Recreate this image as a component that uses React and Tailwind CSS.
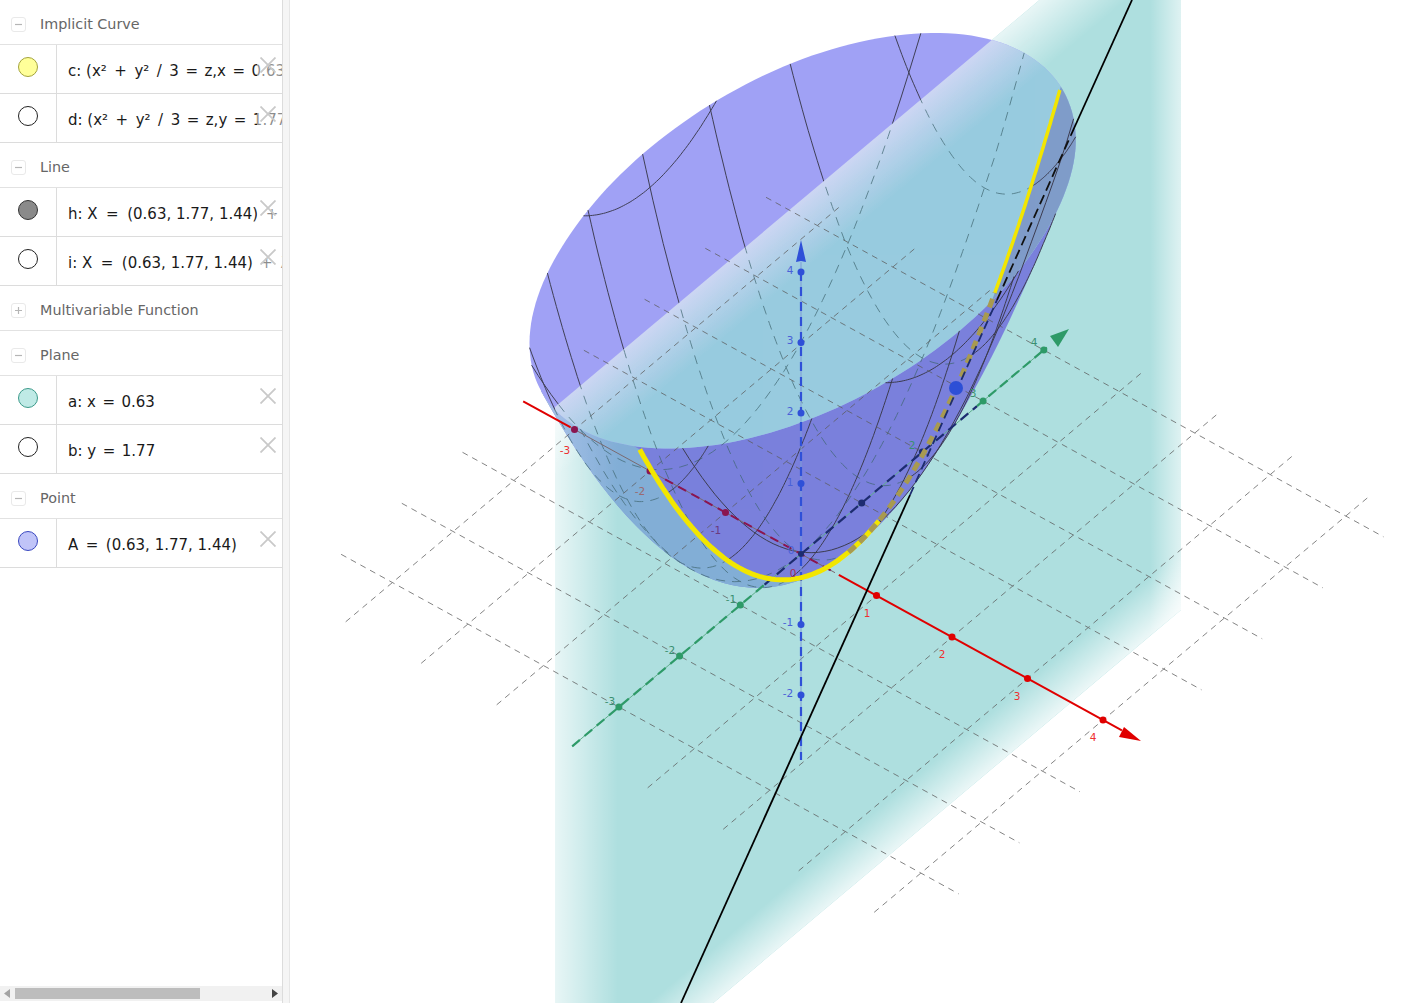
import React from 'react';

const sansFont = { fontFamily: '"DejaVu Sans", sans-serif' };

// view projection of the 3D scene onto screen pixels
const project = (x, y, z) => [801 + 75.5 * x + 60.7 * y, 554 + 41.5 * x - 51 * y - 70.5 * z];
const surfZ = (x, y) => x * x + (y * y) / 3;
const RIM = 4.4;

// the far side of the bowl sits a little further out in the reference (perspective)
const warp = ([px, py]) => {
  const far = Math.max(0, Math.min(1, (244 - py) / 90));
  return [
    px > 801 ? 801 + (px - 801) * (1 + 0.012 * far) : px,
    py < 244 ? py - (244 - py) * 0.03 : py,
  ];
};
const surfPoint = (x, y) => warp(project(x, y, surfZ(x, y)));

const toPath = (pts) => 'M' + pts.map((p) => p[0].toFixed(1) + ' ' + p[1].toFixed(1)).join('L');
const range = (a, b, n = 60) => Array.from({ length: n + 1 }, (_, i) => a + ((b - a) * i) / n);

const rimPts = range(0, Math.PI * 2, 180).map((t) => {
  const x = Math.sqrt(RIM) * Math.cos(t);
  const y = Math.sqrt(3 * RIM) * Math.sin(t);
  return warp(project(x, y, RIM));
});
const rimPath = toPath(rimPts) + 'Z';

// fold of the paraboloid as seen from the camera
const silX = (y) => 0.744 + 0.4147 * y;
const silPts = (a, b) => range(a, b).map((y) => project(silX(y), y, surfZ(silX(y), y)));
const yellowPts = (a, b) => range(a, b).map((y) => project(0.63, y, surfZ(0.63, y)));

const bodyPath = toPath(silPts(-3.437, 2.216)) + 'Z';
const frontPath = toPath([...silPts(-3.437, -0.275), ...yellowPts(-0.275, -3.44)]) + 'Z';
const rightPath = toPath([...yellowPts(0.5, 3.8), [1110, 40], [1110, 420]]) + 'Z';

const planePoly = '555,407 1181,-119 1181,610 555,1136';
const outsidePlane = 'M290 -10H1414V1010H290Z M555 407L1181 -119L1181 610L555 1136Z';

const behind = [];
const front = [];
[-3, -2, -1, 0, 1, 2, 3].forEach((y) => {
  const m = Math.sqrt(RIM - (y * y) / 3);
  behind.push(toPath(range(-m, Math.min(m, 0.63)).map((x) => surfPoint(x, y))));
  front.push(toPath(range(0.63, m).map((x) => surfPoint(x, y))));
});
[-2, -1, 0, 1, 2].forEach((x) => {
  const m = Math.sqrt(3 * (RIM - x * x));
  const d = toPath(range(-m, m).map((y) => surfPoint(x, y)));
  if (x < 0.63) behind.push(d);
  else front.push(d);
});

const grid = [];
[-3, -2, -1, 1, 2, 3, 4].forEach((k) => {
  grid.push(toPath([project(-3.68, k, 0), project(4.5, k, 0)]));
  grid.push(toPath([project(k, -3.77, 0), project(k, 4.4, 0)]));
});

const xLabels = [['-3', 565, 454, '#ee3030'], ['-2', 640, 495, '#9a6a70'], ['-1', 716, 534, '#6a3a80'], ['1', 867, 617, '#ee3030'], ['2', 942, 658, '#ee3030'], ['3', 1017, 700, '#ee3030'], ['4', 1093, 741, '#ee3030']];
const yLabels = [['-3', 610, 705], ['-2', 670, 654], ['-1', 731, 603], ['2', 912, 449], ['3', 973, 397], ['4', 1034, 346]];
const zLabels = [['4', 790, 274], ['3', 790, 344], ['2', 790, 415], ['1', 790, 486], ['-1', 788, 626], ['-2', 788, 697]];

const Scene = () => (
  <svg className="absolute inset-0 w-full h-full" viewBox="290 0 1124 1003">
    <defs>
      <linearGradient id="fadeL" gradientUnits="userSpaceOnUse" x1="555" y1="0" x2="618" y2="0">
        <stop offset="0" stopColor="#fff" stopOpacity="0.72" />
        <stop offset="1" stopColor="#fff" stopOpacity="0" />
      </linearGradient>
      <linearGradient id="fadeR" gradientUnits="userSpaceOnUse" x1="1181" y1="0" x2="1150" y2="0">
        <stop offset="0" stopColor="#fff" stopOpacity="0.6" />
        <stop offset="1" stopColor="#fff" stopOpacity="0" />
      </linearGradient>
      <linearGradient id="fadeT" gradientUnits="userSpaceOnUse" x1="988" y1="43" x2="1024" y2="86">
        <stop offset="0" stopColor="#fff" stopOpacity="0.72" />
        <stop offset="1" stopColor="#fff" stopOpacity="0" />
      </linearGradient>
      <linearGradient id="fadeB" gradientUnits="userSpaceOnUse" x1="950" y1="804" x2="922" y2="771">
        <stop offset="0" stopColor="#fff" stopOpacity="0.75" />
        <stop offset="1" stopColor="#fff" stopOpacity="0" />
      </linearGradient>
      <linearGradient id="innerFade" gradientUnits="userSpaceOnUse" x1="988" y1="43" x2="1024" y2="86">
        <stop offset="0" stopColor="#cdd6f3" />
        <stop offset="1" stopColor="#98cbdf" />
      </linearGradient>
      <linearGradient id="frontFade" gradientUnits="userSpaceOnUse" x1="555" y1="0" x2="618" y2="0">
        <stop offset="0" stopColor="#a4bfe6" />
        <stop offset="1" stopColor="#82aed6" />
      </linearGradient>
      <clipPath id="rimClip"><path d={rimPath} /></clipPath>
      <clipPath id="planeClip"><polygon points={planePoly} /></clipPath>
      <clipPath id="outsideClip"><path d={outsidePlane} clipRule="evenodd" /></clipPath>
    </defs>

    {/* plane a */}
    <polygon points={planePoly} fill="#aedfdf" />
    <g clipPath="url(#planeClip)">
      <rect x="555" y="-120" width="63" height="1260" fill="url(#fadeL)" />
      <rect x="1150" y="-120" width="31" height="1260" fill="url(#fadeR)" />
      <polygon points={planePoly} fill="url(#fadeT)" />
      <polygon points={planePoly} fill="url(#fadeB)" />
    </g>

    {/* paraboloid */}
    <path d={bodyPath} fill="#7a80dc" />
    <path d={frontPath} fill="url(#frontFade)" />
    <path d={rimPath} fill="#a0a1f5" />
    <g clipPath="url(#rimClip)">
      <polygon points={planePoly} fill="url(#innerFade)" />
      <path d={rightPath} fill="#7f9cc9" />
    </g>

    {/* mesh */}
    <g fill="none" strokeWidth="1">
      <g clipPath="url(#outsideClip)" stroke="#3f3f55">
        {behind.map((d, i) => <path key={i} d={d} />)}
      </g>
      <g clipPath="url(#planeClip)" stroke="#3f6670" strokeDasharray="9 7" opacity="0.7">
        {behind.map((d, i) => <path key={i} d={d} />)}
      </g>
      <g stroke="#3c3c50">
        {front.map((d, i) => <path key={i} d={d} />)}
      </g>
    </g>

    {/* grid */}
    <g fill="none" stroke="#5c5c5c" strokeWidth="1" strokeDasharray="6 5" opacity="0.75">
      {grid.map((d, i) => <path key={i} d={d} />)}
    </g>

    {/* x axis */}
    <path d={toPath([project(-3.68, 0, 0), project(-3.05, 0, 0)])} stroke="#e00000" strokeWidth="2" fill="none" />
    <path d={toPath([project(-3.05, 0, 0), project(0.45, 0, 0)])} stroke="#7a6a70" strokeWidth="1" fill="none" />
    <path d={toPath([project(-1.8, 0, 0), project(0.45, 0, 0)])} stroke="#8a1550" strokeWidth="2" strokeDasharray="9 6" fill="none" />
    <path d={toPath([project(0.5, 0, 0), project(4.25, 0, 0)])} stroke="#e00000" strokeWidth="2" fill="none" />
    <polygon points="1141,741 1124,727 1119,737" fill="#e00000" />
    {[-3, -2, -1].map((a) => {
      const [cx, cy] = project(a, 0, 0);
      return <circle key={a} cx={cx} cy={cy} r="3.5" fill="#8a1550" />;
    })}
    {[1, 2, 3, 4].map((a) => {
      const [cx, cy] = project(a, 0, 0);
      return <circle key={a} cx={cx} cy={cy} r="3.5" fill="#e00000" />;
    })}

    {/* y axis */}
    <path d={toPath([project(0, -3.77, 0), project(0, 4.05, 0)])} stroke="#5fae8c" strokeWidth="1" fill="none" />
    <path d={toPath([project(0, -3.77, 0), project(0, -0.6, 0)])} stroke="#2e9a68" strokeWidth="2.2" strokeDasharray="10 6" fill="none" />
    <path d={toPath([project(0, -0.6, 0), project(0, 2.9, 0)])} stroke="#1d2c70" strokeWidth="2.2" strokeDasharray="10 6" fill="none" />
    <path d={toPath([project(0, 2.9, 0), project(0, 4.05, 0)])} stroke="#2e9a68" strokeWidth="2.2" strokeDasharray="10 5" fill="none" />
    <polygon points="1069,329 1050,336 1058,347" fill="#2e9a68" />
    {[-3, -2, -1, 3, 4].map((b) => {
      const [cx, cy] = project(0, b, 0);
      return <circle key={b} cx={cx} cy={cy} r="3.5" fill="#2e9a68" />;
    })}
    {[1, 2].map((b) => {
      const [cx, cy] = project(0, b, 0);
      return <circle key={b} cx={cx} cy={cy} r="3.5" fill="#1d2c70" />;
    })}

    {/* z axis */}
    <path d="M801 262V760" stroke="#7d9cd8" strokeWidth="1" fill="none" />
    <path d="M801 272V760" stroke="#2f50d8" strokeWidth="2.2" strokeDasharray="9 6" fill="none" />
    <polygon points="801,240 796,262 801,261 806,262" fill="#2f50d8" />
    {[4, 3, 2, 1, -1, -2].map((c) => <circle key={c} cx="801" cy={554 - 70.5 * c} r="3.5" fill="#2f50d8" />)}
    <circle cx="801" cy="554" r="3" fill="#1d2c70" />

    {/* curve c */}
    <path d={toPath(yellowPts(-3.44, 0.5))} fill="none" stroke="#f2e600" strokeWidth="5" strokeLinejoin="round" />
    <path d={toPath(yellowPts(0, 2.41))} fill="none" stroke="#a89a50" strokeWidth="5" strokeDasharray="9 6" />
    <path d={toPath(yellowPts(2.41, 3.48))} fill="none" stroke="#f2e600" strokeWidth="3.5" />

    {/* line h */}
    <path d="M681 1003L910 495" stroke="#000" strokeWidth="1.8" fill="none" />
    <path d="M910 495L997 300" stroke="#1d2c70" strokeWidth="1.8" strokeDasharray="9 5" fill="none" />
    <path d="M997 300L1071 135" stroke="#111" strokeWidth="1.8" strokeDasharray="10 5" fill="none" />
    <path d="M1071 135L1132 0" stroke="#000" strokeWidth="1.8" fill="none" />

    {/* point A */}
    <circle cx="956" cy="388" r="7" fill="#2d4fd6" />

    {/* axis labels */}
    <g fontSize="10.5" style={sansFont}>
      {xLabels.map(([t, x, y, c]) => <text key={t} x={x} y={y} textAnchor="middle" fill={c}>{t}</text>)}
      {yLabels.map(([t, x, y]) => <text key={t} x={x} y={y} textAnchor="middle" fill="#3a8f70">{t}</text>)}
      {zLabels.map(([t, x, y]) => <text key={t} x={x} y={y} textAnchor="middle" fill="#4a60d8">{t}</text>)}
      <text x="793" y="577" textAnchor="middle" fill="#a03060">0</text>
      <text x="791" y="554" textAnchor="middle" fill="#4a60d8">0</text>
    </g>
  </svg>
);

// operators in the formulas have uneven spacing, as the editor typesets them
const Op = ({ children, m = 'mx-[6.5px]' }) => <span className={m}>{children}</span>;
const Plus = () => <Op m="mx-[7.5px]">+</Op>;
const Slash = () => <Op m="mx-[7.5px]">/</Op>;
const WideEq = () => <Op m="mx-[8.5px]">=</Op>;

const Toggle = ({ open }) => (
  <span className="w-[15px] h-[15px] border border-[#e9e9e9] rounded-[3px] flex items-center justify-center text-[#b5b5b5]">
    <svg width="9" height="9" viewBox="0 0 9 9">
      <path d={open ? 'M1 4.5H8' : 'M1 4.5H8M4.5 1V8'} stroke="currentColor" strokeWidth="1.2" />
    </svg>
  </span>
);

const Group = ({ title, open = true }) => (
  <div className="h-[45px] pt-[4px] border-b border-[#e2e2e2] flex items-center pl-[11px] gap-[14px]">
    <Toggle open={open} />
    <span className="mt-[2px] text-[14.35px] text-[#666]">{title}</span>
  </div>
);

const Row = ({ marble, children }) => (
  <div className="relative h-[49px] border-b border-[#dcdcdc] flex overflow-hidden">
    <div className="w-[57px] shrink-0 border-r border-[#dcdcdc] flex justify-center pt-[12px]">
      <span className={`w-[20px] h-[20px] rounded-full border ${marble}`} />
    </div>
    <div className="pl-[11px] pt-[15px] text-[15px] leading-[22px] text-[#1a1a1a] whitespace-nowrap">{children}</div>
    <div className="absolute right-0 top-0 w-[25px] h-full bg-white/50">
      <svg className="absolute left-[3px] top-[12px]" width="16" height="16" viewBox="0 0 16 16">
        <path d="M0.5 0.5L15.5 15.5M15.5 0.5L0.5 15.5" stroke="#c9c9c9" strokeWidth="1.8" fill="none" />
      </svg>
    </div>
  </div>
);

const Scrollbar = () => (
  <div className="h-[15px] mb-[2px] bg-[#f1f1f1] flex items-center relative shrink-0">
    <svg className="absolute left-[4px] top-[3px]" width="6" height="9" viewBox="0 0 6 9">
      <path d="M6 0V9L0 4.5Z" fill="#a3a3a3" />
    </svg>
    <div className="ml-[15px] w-[185px] h-[11px] bg-[#bdbdbd]" />
    <svg className="absolute right-[4px] top-[3px]" width="6" height="9" viewBox="0 0 6 9">
      <path d="M0 0V9L6 4.5Z" fill="#444" />
    </svg>
  </div>
);

export default function App() {
  return (
    <div className="flex w-[1414px] h-[1003px] bg-white overflow-hidden" style={sansFont}>
      <div className="w-[283px] shrink-0 flex flex-col border-r border-[#dcdcdc]">
        <div className="flex-1 overflow-hidden">
          <Group title="Implicit Curve" />
          <Row marble="bg-[#ffff99] border-[#a3a33c]">c: (x²<Plus />y²<Slash />3<Op>=</Op>z,x<Op>=</Op>0.63</Row>
          <Row marble="bg-white border-[#222]">d: (x²<Plus />y²<Slash />3<Op>=</Op>z,y<Op>=</Op>1.77</Row>
          <Group title="Line" />
          <Row marble="bg-[#8a8a8a] border-[#333]">h: X<WideEq />(0.63, 1.77, 1.44)<Plus />λ</Row>
          <Row marble="bg-white border-[#222]">i: X<WideEq />(0.63, 1.77, 1.44)<Plus />λ</Row>
          <Group title="Multivariable Function" open={false} />
          <Group title="Plane" />
          <Row marble="bg-[#bfeae6] border-[#3c9a8a]">a: x<Op>=</Op>0.63</Row>
          <Row marble="bg-white border-[#222]">b: y<Op>=</Op>1.77</Row>
          <Group title="Point" />
          <Row marble="bg-[#c0c4f8] border-[#3a48c0]">A<Op m="mx-[7.5px]">=</Op>(0.63, 1.77, 1.44)</Row>
        </div>
        <Scrollbar />
      </div>
      <div className="w-[7px] shrink-0 bg-[#f5f5f5] border-r border-[#e6e6e6]" />
      <div className="relative flex-1 bg-white">
        <Scene />
      </div>
    </div>
  );
}
